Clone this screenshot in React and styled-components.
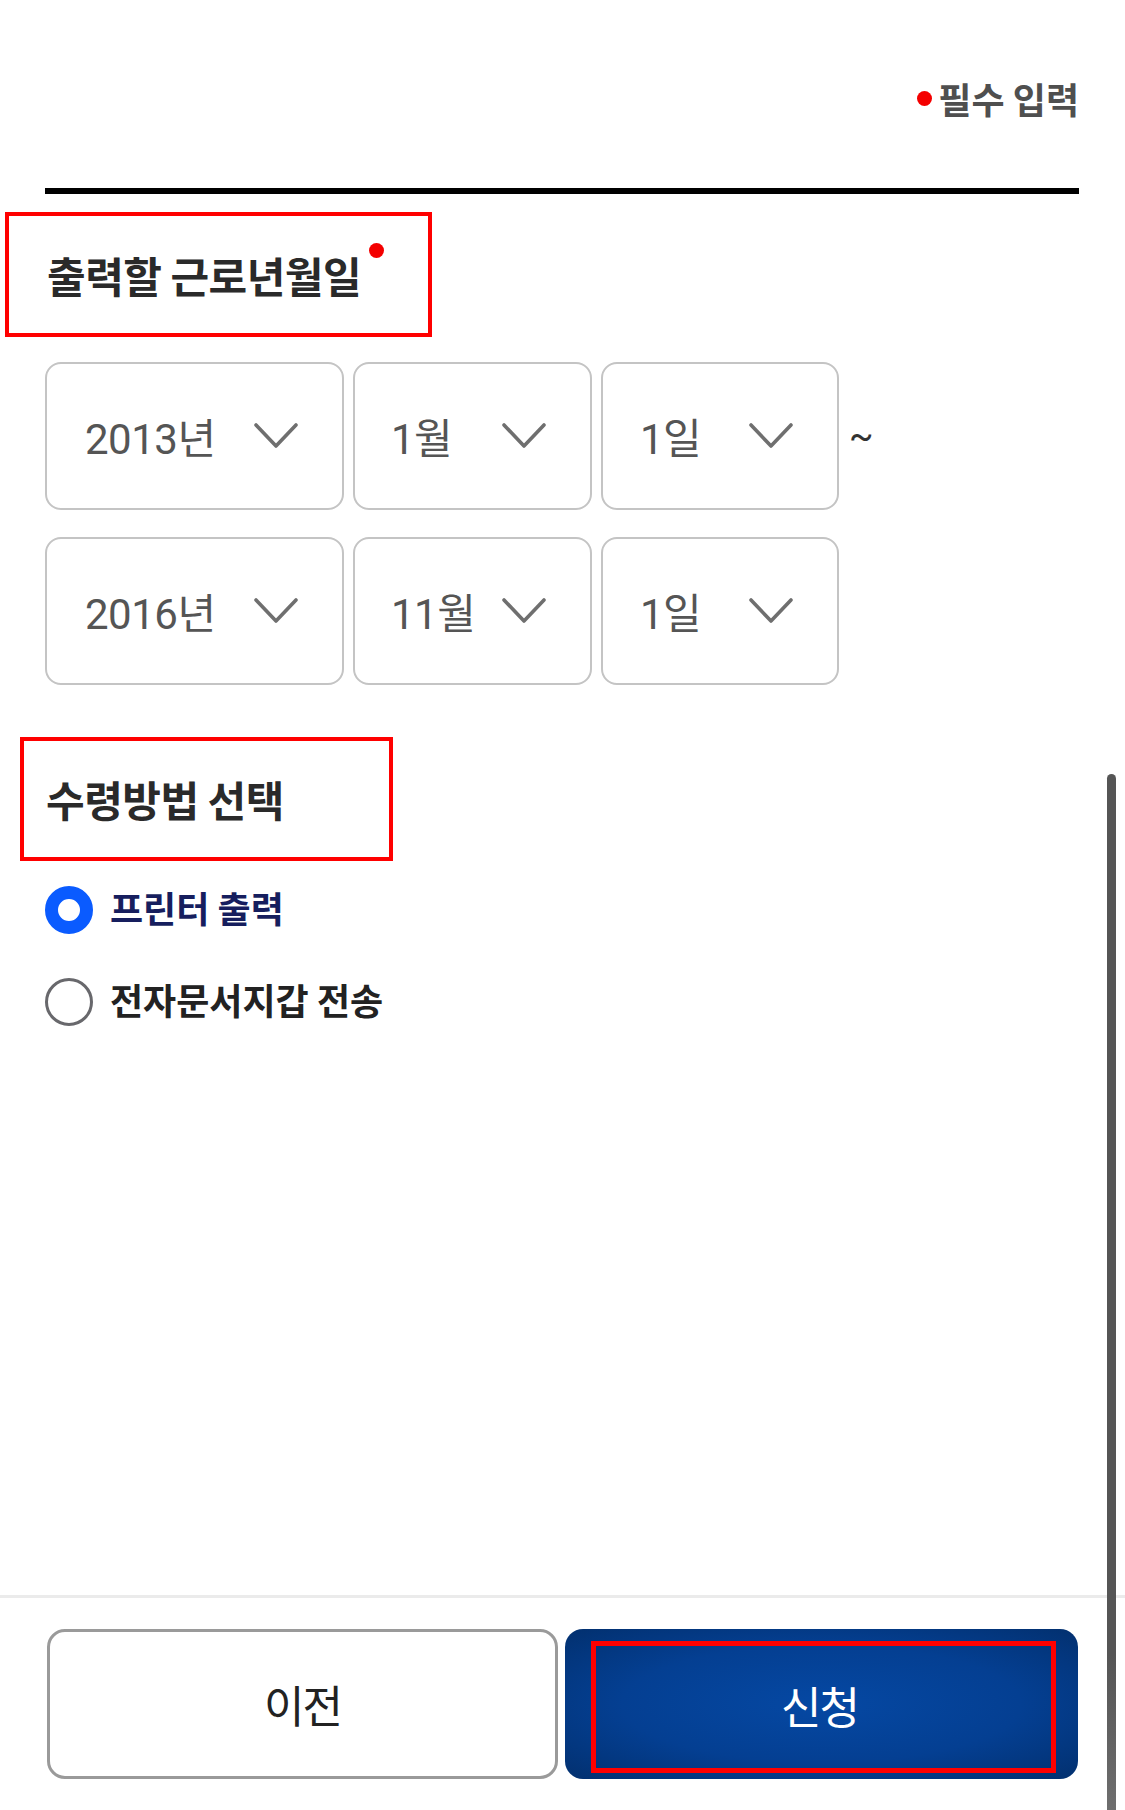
import React from "react";
import styled, { createGlobalStyle } from "styled-components";

const Global = createGlobalStyle`
  html, body { margin: 0; padding: 0; background: #fff; }
  body { font-family: "Noto Sans CJK KR", "Noto Sans", sans-serif; }
  * { box-sizing: border-box; }
`;

const Page = styled.div`
  position: relative;
  min-height: 100vh;
  display: flex;
  flex-direction: column;
  background: #fff;
  overflow: hidden;
`;

const Content = styled.div`
  padding: 0 46px 0 45px;
  display: flex;
  flex-direction: column;
`;

const RequiredRow = styled.div`
  padding-top: 77px;
  height: 120px;
  display: flex;
  justify-content: flex-end;
  align-items: flex-start;
`;

const RequiredLabel = styled.div`
  display: flex;
  align-items: center;
  gap: 6px;
  font-size: 36px;
  line-height: 43px;
  font-weight: 700;
  letter-spacing: 0;
  color: #4f4f4f;
`;

const Dot = styled.span`
  display: inline-block;
  width: ${(p) => p.$size || 15}px;
  height: ${(p) => p.$size || 15}px;
  border-radius: 50%;
  background: #f40000;
  flex: none;
`;

const Rule = styled.div`
  margin-top: 68px;
  height: 6px;
  background: #000;
`;

const AnnotatedHeading = styled.div`
  margin-top: ${(p) => p.$top}px;
  margin-left: ${(p) => -p.$shift}px;
  width: ${(p) => p.$width}px;
  height: ${(p) => p.$height}px;
  padding-left: ${(p) => p.$pad}px;
  border: 4px solid #ff0000;
  display: flex;
  align-items: center;
`;

const HeadingText = styled.h2`
  margin: 0;
  display: flex;
  align-items: flex-start;
  font-size: 42px;
  line-height: 50px;
  font-weight: 700;
  letter-spacing: -0.5px;
  color: #2a2a2a;
`;

const HeadingDot = styled(Dot)`
  margin-left: 8px;
  margin-top: -7px;
`;

const SelectGrid = styled.div`
  margin-top: 25px;
  display: grid;
  grid-template-columns: 299px 239px 238px auto;
  grid-auto-rows: 148px;
  column-gap: 9px;
  row-gap: 27px;
  align-items: center;
`;

const SelectBox = styled.div`
  height: 100%;
  border: 2px solid #c4c4c4;
  border-radius: 16px;
  background: #fff;
  display: flex;
  align-items: center;
  justify-content: space-between;
  padding: 0 44px 0 ${(p) => p.$padLeft || 38}px;
`;

const SelectValue = styled.span`
  font-family: Roboto, "Noto Sans CJK KR", sans-serif;
  font-size: 42px;
  font-weight: 400;
  letter-spacing: -0.5px;
  color: #555;
  margin-top: -2px;
`;

const Tilde = styled.span`
  font-family: Roboto, sans-serif;
  font-size: 36px;
  color: #333;
  padding-left: 1px;
`;

const RadioList = styled.div`
  margin-top: 25px;
  display: flex;
  flex-direction: column;
  gap: 44px;
`;

const RadioRow = styled.label`
  display: flex;
  align-items: center;
  gap: 17px;
  height: 48px;
`;

const RadioMark = styled.span`
  width: 48px;
  height: 48px;
  border-radius: 50%;
  flex: none;
  background: #fff;
  border: ${(p) => (p.$checked ? "13px solid #0a5bff" : "3.5px solid #68686c")};
`;

const RadioText = styled.span`
  font-size: 36px;
  font-weight: 700;
  letter-spacing: 0;
  line-height: 43px;
  margin-top: -6px;
  color: ${(p) => (p.$checked ? "#161e5e" : "#222")};
`;

const Footer = styled.div`
  margin-top: auto;
  border-top: 3px solid #ebebeb;
  padding: 31px 47px 31px 47px;
  display: grid;
  grid-template-columns: 511px 513px;
  column-gap: 7px;
`;

const OutlineButton = styled.button`
  height: 150px;
  border: 3px solid #9a9a9a;
  border-radius: 18px;
  background: #fff;
  font-family: "Noto Sans CJK KR", sans-serif;
  font-size: 44px;
  font-weight: 400;
  letter-spacing: -2px;
  color: #222;
  display: flex;
  align-items: center;
  justify-content: center;
  padding: 0;
`;

const PrimaryButton = styled.button`
  height: 150px;
  border: none;
  border-radius: 18px;
  background: radial-gradient(ellipse at center, #0548a3 0%, #043f92 55%, #02306f 100%);
  padding: 12px 22px 6px 26px;
  display: flex;
  font-family: "Noto Sans CJK KR", sans-serif;
`;

const PrimaryLabel = styled.span`
  flex: 1;
  border: 5px solid #ff0000;
  display: flex;
  align-items: center;
  justify-content: center;
  font-size: 44px;
  font-weight: 400;
  letter-spacing: -2px;
  color: #fff;
  padding-bottom: 4px;
  padding-right: 8px;
`;

const ScrollThumb = styled.div`
  position: absolute;
  left: 1107px;
  top: 774px;
  bottom: 0;
  width: 9px;
  border-radius: 5px 5px 0 0;
  background: linear-gradient(#555 0%, #555 85%, #6e6e6e 100%);
`;

const Chevron = () => (
  <svg width="44" height="26" viewBox="0 0 44 26" fill="none">
    <polyline
      points="2,2 22,23 42,2"
      stroke="#6f6f6f"
      strokeWidth="3.6"
      strokeLinecap="round"
      strokeLinejoin="round"
    />
  </svg>
);

const rows = [
  [
    { v: "2013년", pad: 38 },
    { v: "1월", pad: 36 },
    { v: "1일", pad: 37 },
  ],
  [
    { v: "2016년", pad: 38 },
    { v: "11월", pad: 36 },
    { v: "1일", pad: 37 },
  ],
];

export default function App() {
  return (
    <Page>
      <Global />
      <Content>
        <RequiredRow>
          <RequiredLabel>
            <Dot />
            필수 입력
          </RequiredLabel>
        </RequiredRow>
        <Rule />
        <AnnotatedHeading $top={18} $shift={40} $width={427} $height={125} $pad={38}>
          <HeadingText>
            출력할 근로년월일
            <HeadingDot />
          </HeadingText>
        </AnnotatedHeading>
        <SelectGrid>
          {rows.map((row, i) => (
            <React.Fragment key={i}>
              {row.map((c, j) => (
                <SelectBox key={j} $padLeft={c.pad}>
                  <SelectValue>{c.v}</SelectValue>
                  <Chevron />
                </SelectBox>
              ))}
              {i === 0 ? <Tilde>~</Tilde> : <span />}
            </React.Fragment>
          ))}
        </SelectGrid>
        <AnnotatedHeading $top={52} $shift={25} $width={373} $height={124} $pad={22}>
          <HeadingText>수령방법 선택</HeadingText>
        </AnnotatedHeading>
        <RadioList>
          <RadioRow>
            <RadioMark $checked />
            <RadioText $checked>프린터 출력</RadioText>
          </RadioRow>
          <RadioRow>
            <RadioMark />
            <RadioText>전자문서지갑 전송</RadioText>
          </RadioRow>
        </RadioList>
      </Content>
      <Footer>
        <OutlineButton>이전</OutlineButton>
        <PrimaryButton>
          <PrimaryLabel>신청</PrimaryLabel>
        </PrimaryButton>
      </Footer>
      <ScrollThumb />
    </Page>
  );
}
